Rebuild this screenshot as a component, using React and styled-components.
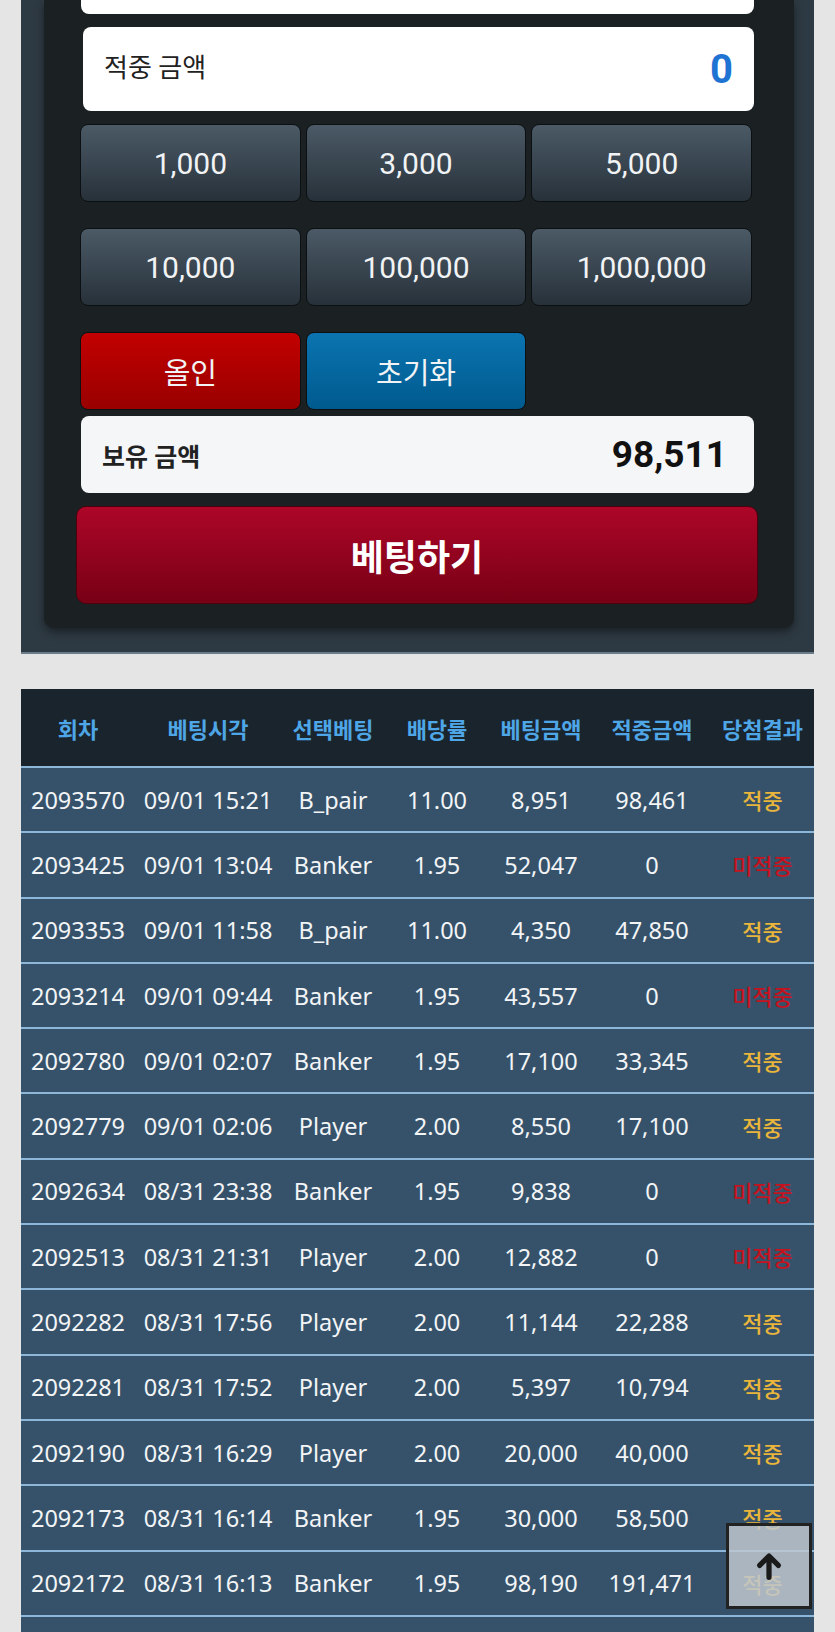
import styled, { createGlobalStyle } from "styled-components";

const GlobalStyle = createGlobalStyle`
  html, body {
    margin: 0;
    padding: 0;
    background: #e5e5e5;
    font-family: "Noto Sans", "Noto Sans CJK KR", sans-serif;
  }
`;

const korean = `"Roboto", "Noto Sans CJK KR", sans-serif`;

const chips = ["1,000", "3,000", "5,000", "10,000", "100,000", "1,000,000"];

const history = [
  ["2093570", "09/01 15:21", "B_pair", "11.00", "8,951", "98,461", true],
  ["2093425", "09/01 13:04", "Banker", "1.95", "52,047", "0", false],
  ["2093353", "09/01 11:58", "B_pair", "11.00", "4,350", "47,850", true],
  ["2093214", "09/01 09:44", "Banker", "1.95", "43,557", "0", false],
  ["2092780", "09/01 02:07", "Banker", "1.95", "17,100", "33,345", true],
  ["2092779", "09/01 02:06", "Player", "2.00", "8,550", "17,100", true],
  ["2092634", "08/31 23:38", "Banker", "1.95", "9,838", "0", false],
  ["2092513", "08/31 21:31", "Player", "2.00", "12,882", "0", false],
  ["2092282", "08/31 17:56", "Player", "2.00", "11,144", "22,288", true],
  ["2092281", "08/31 17:52", "Player", "2.00", "5,397", "10,794", true],
  ["2092190", "08/31 16:29", "Player", "2.00", "20,000", "40,000", true],
  ["2092173", "08/31 16:14", "Banker", "1.95", "30,000", "58,500", true],
  ["2092172", "08/31 16:13", "Banker", "1.95", "98,190", "191,471", true],
];

const columns = [
  ["회차", 114],
  ["베팅시각", 146],
  ["선택베팅", 104],
  ["배당률", 104],
  ["베팅금액", 104],
  ["적중금액", 118],
  ["당첨결과", 103],
];

function App() {
  return (
    <>
      <GlobalStyle />
      <Page>
        <BetSection>
          <BetPanel>
            <TopBox />
            <WinBox>
              <WinLabel>적중 금액</WinLabel>
              <WinValue>0</WinValue>
            </WinBox>
            <ChipGrid>
              {chips.map((c) => (
                <ChipButton key={c}>{c}</ChipButton>
              ))}
            </ChipGrid>
            <ActionRow>
              <ActionButton $tone="red">올인</ActionButton>
              <ActionButton $tone="blue">초기화</ActionButton>
            </ActionRow>
            <BalanceBox>
              <BalanceLabel>보유 금액</BalanceLabel>
              <BalanceValue>98,511</BalanceValue>
            </BalanceBox>
            <BetButton>베팅하기</BetButton>
          </BetPanel>
        </BetSection>

        <TableWrap>
          <HistoryTable>
            <colgroup>
              {columns.map(([name, w]) => (
                <col key={name} style={{ width: w }} />
              ))}
            </colgroup>
            <thead>
              <tr>
                {columns.map(([name]) => (
                  <HeadCell key={name}>{name}</HeadCell>
                ))}
              </tr>
            </thead>
            <tbody>
              {history.map((row) => (
                <BodyRow key={row[0]}>
                  {row.slice(0, 6).map((v, i) => (
                    <Cell key={i}>{v}</Cell>
                  ))}
                  <Cell>
                    <Result $win={row[6]}>{row[6] ? "적중" : "미적중"}</Result>
                  </Cell>
                </BodyRow>
              ))}
            </tbody>
          </HistoryTable>
        </TableWrap>
      </Page>

      <TopButton aria-label="맨 위로">
        <svg width="30" height="30" viewBox="0 0 24 24" fill="none">
          <path
            d="M12 21V4.5M4.5 11.5L12 4l7.5 7.5"
            stroke="#1a1a1a"
            strokeWidth="4.2"
            strokeLinecap="round"
            strokeLinejoin="round"
          />
        </svg>
      </TopButton>
    </>
  );
}

const Page = styled.div`
  padding: 0 21px;
`;

const BetSection = styled.section`
  background: #2e3a43;
  border-bottom: 2px solid #6b7b88;
  padding: 0 20px 24px 23px;
`;

const BetPanel = styled.div`
  background: #1b2023;
  border-radius: 0 0 10px 10px;
  box-shadow: 0 4px 10px rgba(0, 0, 0, 0.45);
  padding: 0 40px 24px 36px;
  display: flex;
  flex-direction: column;
`;

const TopBox = styled.div`
  height: 14px;
  margin: 0 0 13px 1px;
  background: #fff;
  border-radius: 0 0 8px 8px;
`;

const WinBox = styled.div`
  height: 84px;
  margin-left: 3px;
  background: #fff;
  border-radius: 8px;
  display: flex;
  align-items: center;
  justify-content: space-between;
  padding: 0 21px 0 21px;
`;

const WinLabel = styled.span`
  font-family: ${korean};
  font-size: 26px;
  color: #222;
  margin-top: -8px;
`;

const WinValue = styled.span`
  font-family: ${korean};
  font-size: 40px;
  font-weight: 700;
  color: #1f73d2;
`;

const ChipGrid = styled.div`
  display: grid;
  grid-template-columns: repeat(3, 1fr);
  column-gap: 5px;
  row-gap: 26px;
  margin: 13px 2px 0 0;
`;

const buttonBase = `
  height: 78px;
  border-radius: 8px;
  border: 1.5px solid #0c1013;
  color: #f1f3f5;
  font-family: "Roboto", "Noto Sans CJK KR", sans-serif;
  display: flex;
  align-items: center;
  justify-content: center;
  padding: 0;
  cursor: pointer;
`;

const ChipButton = styled.button`
  ${buttonBase}
  font-size: 30px;
  background: linear-gradient(#4b5a66, #27313a);
`;

const ActionRow = styled.div`
  display: grid;
  grid-template-columns: repeat(3, 1fr);
  column-gap: 5px;
  margin: 26px 2px 0 0;
`;

const ActionButton = styled.button`
  ${buttonBase}
  font-size: 29px;
  background: ${(p) =>
    p.$tone === "red"
      ? "linear-gradient(#c20000, #990000)"
      : "linear-gradient(#0b74b0, #005a8e)"};
`;

const BalanceBox = styled.div`
  height: 77px;
  margin: 6px 0 0 1px;
  background: #f5f6f8;
  border-radius: 8px;
  display: flex;
  align-items: center;
  justify-content: space-between;
  padding: 0 27px 0 21px;
`;

const BalanceLabel = styled.span`
  font-family: ${korean};
  font-size: 25px;
  font-weight: 700;
  color: #222;
`;

const BalanceValue = styled.span`
  font-family: ${korean};
  font-size: 37px;
  font-weight: 700;
  color: #111;
`;

const BetButton = styled.button`
  height: 98px;
  margin: 13px -4px 0 -4px;
  border-radius: 10px;
  border: 1px solid #4e000e;
  background: linear-gradient(#ad0628, #770015);
  color: #fff;
  font-family: ${korean};
  font-size: 36px;
  font-weight: 700;
  cursor: pointer;
`;

const TableWrap = styled.div`
  margin-top: 35px;
  background: #35526a;
  padding-bottom: 60px;
`;

const HistoryTable = styled.table`
  width: 100%;
  border-collapse: collapse;
  table-layout: fixed;
`;

const HeadCell = styled.th`
  height: 77px;
  padding: 0;
  background: #1a242c;
  border-bottom: 2px solid #8cb7d9;
  color: #4ea6e6;
  font-family: "Noto Sans CJK KR", sans-serif;
  font-size: 22px;
  font-weight: 700;
  text-align: center;
  white-space: nowrap;
`;

const BodyRow = styled.tr`
  background: #35526a;
  border-bottom: 2px solid #8cb7d9;
`;

const Cell = styled.td`
  height: 63.3px;
  padding: 0;
  text-align: center;
  color: #f2f4f6;
  font-family: "Noto Sans", "Noto Sans CJK KR", sans-serif;
  font-size: 23.5px;
  white-space: nowrap;
`;

const Result = styled.span`
  font-family: "Noto Sans CJK KR", sans-serif;
  font-size: 22px;
  font-weight: 500;
  color: ${(p) => (p.$win ? "#e9b53b" : "#c4121e")};
`;

const TopButton = styled.button`
  position: fixed;
  right: 23px;
  bottom: 23px;
  width: 86px;
  height: 86px;
  padding: 0;
  border: 3px solid #222;
  background: rgba(190, 199, 207, 0.85);
  display: flex;
  align-items: center;
  justify-content: center;
  cursor: pointer;
`;

export default App;
